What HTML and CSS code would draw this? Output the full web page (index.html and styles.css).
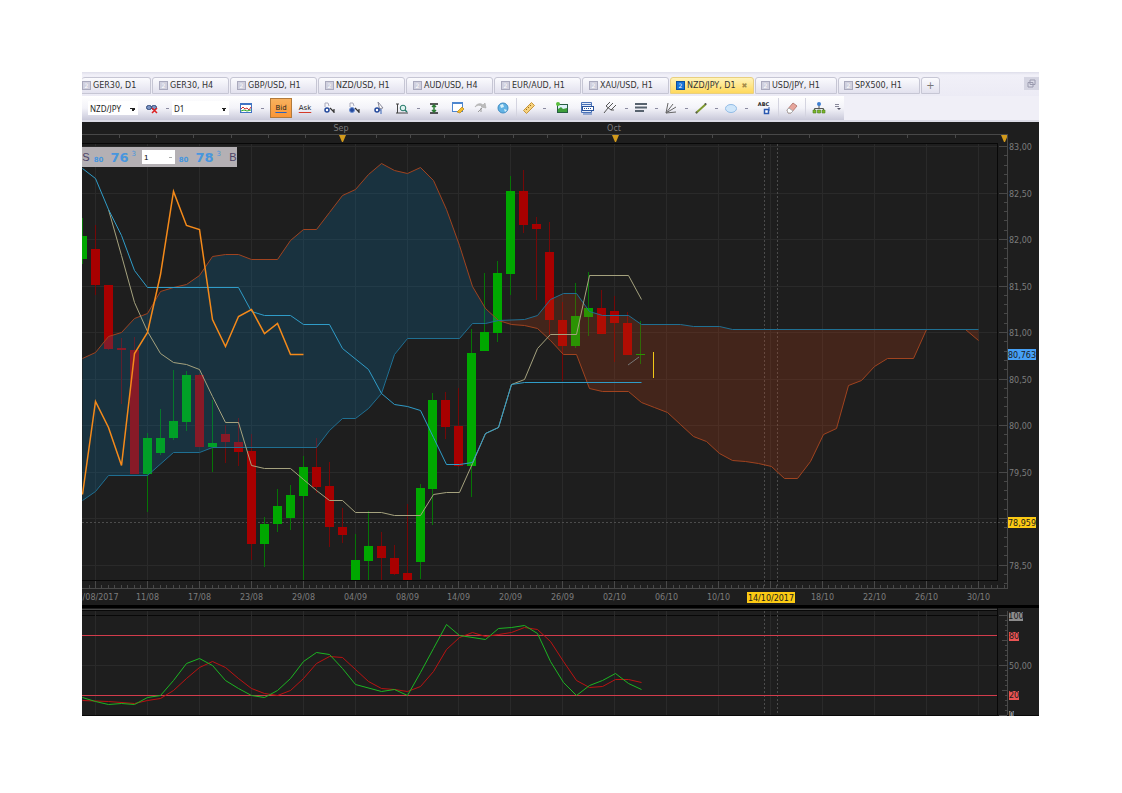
FILE: index.html
```html
<!DOCTYPE html>
<html lang="en">
<head>
    <meta charset="UTF-8">
    <meta name="viewport" content="width=device-width, initial-scale=1.0">
    <title>NZD/JPY, D1</title>
    <link rel="stylesheet" href="styles.css">
</head>
<body>

    <main class="workspace">
        <!-- Chart tabs -->
        <nav class="tabs">
            <a href="#" class="tab first"><span class="tab-icon">2</span>GER30, D1</a>
            <a href="#" class="tab short"><span class="tab-icon">2</span>GER30, H4</a>
            <a href="#" class="tab"><span class="tab-icon">2</span>GBP/USD, H1</a>
            <a href="#" class="tab"><span class="tab-icon">2</span>NZD/USD, H1</a>
            <a href="#" class="tab"><span class="tab-icon">2</span>AUD/USD, H4</a>
            <a href="#" class="tab"><span class="tab-icon">2</span>EUR/AUD, H1</a>
            <a href="#" class="tab"><span class="tab-icon">2</span>XAU/USD, H1</a>
            <a href="#" class="tab active"><span class="tab-icon">2</span>NZD/JPY, D1<span class="tab-close">✖</span></a>
            <a href="#" class="tab medium"><span class="tab-icon">2</span>USD/JPY, H1</a>
            <a href="#" class="tab medium"><span class="tab-icon">2</span>SPX500, H1</a>
            <button class="tab-add" aria-label="New tab">+</button>
            <button class="restore" aria-label="Restore window">
                <svg width="9" height="9" viewBox="0 0 9 9"><path d="M3 1h5v4.500H3zM1 3.500h5V8H1z" fill="#dcdce8" stroke="#9a9aae"/></svg>
            </button>
        </nav>

        <!-- Toolbar -->
        <div class="toolbar-row">
            <div class="toolbar">
                <select class="symbol" aria-label="Symbol"><option>NZD/JPY</option></select>
                <button class="tool small" aria-label="Link charts">
                    <svg viewBox="0 0 14 14"><rect x="1.500" y="4.500" width="5" height="4" rx="2" fill="#7c95c4" stroke="#2d4778"/><rect x="6.500" y="4.500" width="5" height="4" rx="2" fill="#7c95c4" stroke="#2d4778"/><path d="M7 7l5 5M12 7l-5 5" stroke="#d22" stroke-width="1.500"/></svg>
                </button>
                <button class="caret" aria-label="Link options"></button>
                <select class="period" aria-label="Period"><option>D1</option></select>
                <button class="tool chart-kind" aria-label="Chart type">
                    <svg viewBox="0 0 14 14"><rect x="1.500" y="2.500" width="11" height="9" fill="#fff" stroke="#3f74c4"/><path d="M1 3h12" stroke="#3f74c4" stroke-width="2"/><path d="M2 8l2-2 2 2 2-1 2 2 2-3" fill="none" stroke="#c33"/><path d="M2 10l3-1 3 1 4-1" fill="none" stroke="#3a3"/></svg>
                </button>
                <button class="caret" aria-label="Chart type options"></button>
                <button class="price bid on">Bid</button>
                <button class="price ask">Ask</button>
                <button class="tool wide" aria-label="Zoom to object">
                    <svg viewBox="0 0 14 14"><path d="M3 6V2h3l1 3" fill="none" stroke="#aab"/><circle cx="5" cy="9" r="2" fill="#fff" stroke="#24499c" stroke-width="1.500"/><path d="M8 7l4 4M12 8v4" fill="none" stroke="#333" stroke-width="1.200"/></svg>
                </button>
                <button class="tool wide" aria-label="Scroll chart">
                    <svg viewBox="0 0 14 14"><path d="M3 6V2h3l1 3" fill="none" stroke="#aab"/><circle cx="5" cy="9" r="2.500" fill="#24499c" stroke="#6f92d4"/><path d="M8 7l4 4M12 8v4" fill="none" stroke="#333" stroke-width="1.200"/></svg>
                </button>
                <button class="tool wide" aria-label="Select object">
                    <svg viewBox="0 0 14 14"><path d="M6 1l5 6-3 .5V10z" fill="#fff" stroke="#889"/><circle cx="5" cy="9" r="2" fill="#fff" stroke="#24499c" stroke-width="1.500"/><path d="M9 8v5" stroke="#3665b8"/></svg>
                </button>
                <button class="tool" aria-label="Zoom">
                    <svg viewBox="0 0 14 14"><path d="M2.500 3v9M1 3h3M1 12h12" stroke="#444" fill="none"/><circle cx="8" cy="7" r="2.800" fill="#dff2f0" stroke="#276"/><path d="M10 9l2 2" stroke="#276" stroke-width="1.500"/></svg>
                </button>
                <button class="caret" aria-label="Zoom options"></button>
                <button class="tool" aria-label="Fit price scale">
                    <svg viewBox="0 0 14 14"><path d="M3 3h8M3 12h8" stroke="#222" stroke-width="1.500"/><path d="M7 4v7M5 6l2-2 2 2M5 9l2 2 2-2" stroke="#2b7a33" fill="none" stroke-width="1.500"/></svg>
                </button>
                <button class="tool wide" aria-label="Edit template">
                    <svg viewBox="0 0 14 14"><rect x="1.500" y="1.500" width="10" height="9" fill="#fff" stroke="#4d86cf"/><path d="M1 2h11" stroke="#4d86cf" stroke-width="2"/><path d="M6 11l5-5 2 2-4 4z" fill="#f3bd2e" stroke="#b88113" stroke-width=".7"/></svg>
                </button>
                <button class="tool" aria-label="Redo">
                    <svg viewBox="0 0 14 14"><path d="M1 6c2-4 6-4 8-2l2-2 1 5-5-1 1-1C6 4 3 4 1 6z" fill="#bbb" stroke="#aaa" stroke-width=".6"/><path d="M4 11l4-4M7 7v4" stroke="#999"/></svg>
                </button>
                <button class="tool" aria-label="Web">
                    <svg viewBox="0 0 14 14"><circle cx="7" cy="7" r="5" fill="#62b2e4" stroke="#3f8dc4"/><path d="M4 4l3-1 1 3-3 1zM8 8l3 1-2 2z" fill="#d5f0fa"/></svg>
                </button>
                <span class="divider"></span>
                <button class="tool small" aria-label="Ruler">
                    <svg viewBox="0 0 14 14"><path d="M1.500 9.500l8-8 3 3-8 8z" fill="#f6d27e" stroke="#c8963a"/><path d="M4 8l1 1M6 6l1 1M8 4l1 1" stroke="#9c6c1b"/></svg>
                </button>
                <button class="caret" aria-label="Ruler options"></button>
                <button class="tool wide" aria-label="Save picture">
                    <svg viewBox="0 0 14 14"><rect x="2" y="3" width="11" height="9" fill="#275f43"/><rect x="3" y="4" width="9" height="4" fill="#dff0fa"/><path d="M3 11V8l3-2 2 2 4-1v4z" fill="#3e9e3a"/><circle cx="3" cy="3" r="2" fill="#5abf3c"/></svg>
                </button>
                <button class="tool wide" aria-label="Add label">
                    <svg viewBox="0 0 14 14"><path d="M1.500 1.500h10v10h-10zM1.500 3.500h10" fill="#e4ecf8" stroke="#4a72b8"/><rect x="2.500" y="5.500" width="11" height="4" fill="#fff" stroke="#29539c"/><path d="M4 7.500h8" stroke="#29539c" stroke-dasharray="1 1"/><path d="M3 13h9" stroke="#4a72b8"/></svg>
                </button>
                <button class="tool" aria-label="Pitchfork">
                    <svg viewBox="0 0 14 14"><path d="M1 12l4-5M3 5l5 4M3 5l4-4M5 7l5-5M8 9l5-5M8 9h3" fill="none" stroke="#555"/></svg>
                </button>
                <button class="caret" aria-label="Pitchfork options"></button>
                <button class="tool small" aria-label="Fibonacci">
                    <svg viewBox="0 0 14 14"><path d="M1 3h12M1 6.500h12M1 10h9" stroke="#57626e" stroke-width="2"/></svg>
                </button>
                <button class="caret" aria-label="Fibonacci options"></button>
                <button class="tool small" aria-label="Fan">
                    <svg viewBox="0 0 14 14"><path d="M2 12L4 2M2 12l7-9M2 12l10-6M2 12l10-1" stroke="#666" fill="none"/></svg>
                </button>
                <button class="caret" aria-label="Fan options"></button>
                <button class="tool small" aria-label="Line">
                    <svg viewBox="0 0 14 14"><path d="M2 12L12 3" stroke="#7f9a30" stroke-width="2"/><circle cx="2.500" cy="11.500" r="1" fill="#555"/><circle cx="11.500" cy="3" r="1" fill="#555"/></svg>
                </button>
                <button class="caret" aria-label="Line options"></button>
                <button class="tool small" aria-label="Ellipse">
                    <svg viewBox="0 0 14 14"><ellipse cx="7" cy="7.500" rx="5.500" ry="4" fill="#cfe6fa" stroke="#92bce6"/></svg>
                </button>
                <button class="caret" aria-label="Ellipse options"></button>
                <button class="tool wide text-tool" aria-label="Text label">ABC
                    <svg viewBox="0 0 8 8"><rect x="1.500" y="2.500" width="4" height="4" fill="#fff" stroke="#2a58b0" stroke-width="1.500"/><path d="M6 0v4" stroke="#2a58b0"/></svg>
                </button>
                <span class="divider"></span>
                <button class="tool" aria-label="Eraser">
                    <svg viewBox="0 0 14 14"><path d="M2 9l6-7 4 3-6 7H3z" fill="#e7a59c" stroke="#b98078"/><path d="M2 9l2-2 4 3-2 2H3z" fill="#fff" stroke="#aaa"/></svg>
                </button>
                <span class="divider"></span>
                <button class="tool" aria-label="Object tree">
                    <svg viewBox="0 0 14 14"><path d="M7 4v4M2.500 10V7.500h9V10" stroke="#555" fill="none"/><circle cx="7" cy="3" r="2" fill="#3f7fd0"/><path d="M1 9h3v3H1zM5.500 9h3v3h-3zM10 9h3v3h-3z" fill="#7eb62c" stroke="#47801c" stroke-width=".6"/></svg>
                </button>
                <button class="more" aria-label="More buttons">
                    <svg width="8" height="8" viewBox="0 0 8 8"><path d="M1 1.500h4M1 3.500h4" stroke="#889"/><path d="M3 5h4L5 7z" fill="#556"/></svg>
                </button>
            </div>
        </div>

        <!-- Price chart -->
        <section class="panel">
            <svg id="price-chart" viewBox="82 122 957 484" role="img" aria-label="NZD/JPY daily chart"></svg>
            <form class="ticket">
                <button type="button" class="side">S</button>
                <span class="quote"><small>80</small><b>76</b><sup>3</sup></span>
                <select class="amount" aria-label="Amount"><option>1</option></select>
                <span class="quote"><small>80</small><b>78</b><sup>3</sup></span>
                <button type="button" class="side">B</button>
            </form>
        </section>

        <!-- Stochastic -->
        <section class="panel">
            <svg id="stoch-chart" viewBox="82 606 957 110" role="img" aria-label="Stochastic oscillator"></svg>
        </section>
    </main>

    <script src="chart.js"></script>
</body>
</html>
```

FILE: styles.css
```css
* {
    box-sizing: border-box;
}

body {
    font-family: "DejaVu Sans", Verdana, sans-serif;
    font-size: 8px;
    background-color: #fff;
    color: #222;
    margin: 0;
    padding: 72px 83px 77px 82px;
}

button {
    font: inherit;
    color: inherit;
    border: none;
    background: none;
    padding: 0;
}

.workspace {
    background: #1e1e1e;
    overflow: hidden;
}

/* tabs */
.tabs {
    display: flex;
    align-items: flex-end;
    gap: 1px;
    height: 24px;
    padding-bottom: 2px;
    background: linear-gradient(#dedeea, #f1f0f8 3px, #ecebf5);
}

.tab {
    display: flex;
    align-items: center;
    gap: 2px;
    flex: 0 0 87px;
    height: 17px;
    padding-left: 6px;
    border: 1px solid #c6c6d4;
    border-radius: 3px 3px 0 0;
    background: linear-gradient(#fbfbfe, #e2e1ee);
    color: #333;
    text-decoration: none;
    white-space: nowrap;
}

.tab.first {
    flex-basis: 69px;
    padding-left: 0;
    border-left: none;
}

.tab.short {
    flex-basis: 77px;
}

.tab.medium {
    flex-basis: 82px;
    padding-left: 5px;
}

.tab.active {
    flex-basis: 84px;
    padding-left: 5px;
    background: linear-gradient(#fff3b8, #ffd95c);
    border-color: #e8cf80;
}

.tab-icon {
    width: 9px;
    height: 9px;
    border: 1px solid #a9a9bd;
    background: #d0d0de;
    color: #fff;
    font-size: 6px;
    line-height: 7px;
    text-align: center;
}

.active .tab-icon {
    background: #1673d8;
    border-color: #0c4f9c;
}

.tab-close {
    margin-left: 4px;
    color: #a58b4a;
    font-size: 7px;
}

.tab-add {
    width: 19px;
    height: 17px;
    border: 1px solid #c6c6d4;
    border-radius: 3px 3px 0 0;
    background: linear-gradient(#fbfbfe, #e2e1ee);
    color: #777;
    font-size: 10px;
    line-height: 14px;
}

.restore {
    display: flex;
    align-items: center;
    justify-content: center;
    width: 15px;
    height: 13px;
    margin: 0 0 4px auto;
    background: #d5d5e2;
}

/* toolbar */
.toolbar-row {
    background: #f0eff7;
    border-bottom: 2px solid #dcdce6;
}

.toolbar {
    display: flex;
    align-items: center;
    width: 762px;
    height: 24px;
    padding-left: 6px;
    background: linear-gradient(#ffffff, #f3f3f9 50%, #c9c9da);
}

.toolbar select {
    appearance: none;
    height: 14px;
    padding: 0 2px;
    border: none;
    border-radius: 0;
    background-color: #fff;
    background-image: linear-gradient(to bottom left, #222 50%, transparent 50%), linear-gradient(to bottom right, #222 50%, transparent 50%);
    background-repeat: no-repeat;
    background-size: 3px 3px;
    background-position: right 5px top 7px, right 2px top 7px;
    color: #222;
    font-family: "Noto Sans", sans-serif;
    font-size: 8px;
}

.toolbar .symbol {
    width: 50px;
    margin-right: 4px;
}

.toolbar .period {
    width: 57px;
    margin-right: 6px;
}

.tool {
    display: flex;
    align-items: center;
    justify-content: center;
    flex: 0 0 22px;
    height: 20px;
}

.tool.small {
    flex-basis: 20px;
}

.tool.wide {
    flex-basis: 25px;
}

.tool svg {
    width: 14px;
    height: 14px;
}

.caret {
    flex: 0 0 10px;
    height: 20px;
    background: linear-gradient(#8a8aa0, #8a8aa0) no-repeat center / 3px 1px;
}

.price {
    width: 22px;
    height: 20px;
    border: 1px solid transparent;
    font-size: 7px;
    text-decoration: underline 1px;
    text-underline-offset: 2px;
}

.bid {
    margin: 0 2px 0 3px;
    text-decoration-color: #2a62c0;
}

.ask {
    text-decoration-color: #d43a2a;
}

.price.on {
    background: linear-gradient(#f9b25e, #fb9636);
    border-color: #b27a3c;
}

.divider {
    flex: 0 0 1px;
    height: 20px;
    margin: 0 2px;
    background: #d4d4e0;
}

.tool.text-tool {
    flex-direction: column;
    font-size: 5px;
    font-weight: bold;
    line-height: 5px;
}

.text-tool svg {
    width: 8px;
    height: 8px;
    margin-left: 6px;
}

.more {
    width: 12px;
    height: 24px;
    margin-left: auto;
}

/* charts */
.panel {
    position: relative;
}

.panel > svg {
    display: block;
    width: 100%;
    height: auto;
}

.grid {
    stroke: #2a2a2a;
}

.edge {
    stroke: #080808;
}

.gutter {
    fill: #000;
}

.axis,
.tick {
    stroke: #484848;
}

.axis-text {
    fill: #7c7c7c;
    font-size: 8px;
}

.middle {
    text-anchor: middle;
}

.marker {
    fill: #d29a1c;
}

.crosshair {
    stroke: #4c4c4c;
    stroke-dasharray: 2 2;
}

.up {
    fill: #00a800;
    stroke: none;
}

.down {
    fill: #a80000;
    stroke: none;
}

.wick.up {
    fill: #067506;
}

.wick.down {
    fill: #740808;
}

.line {
    fill: none;
    stroke-width: 1;
}

.cloud-up {
    fill: rgba(5, 130, 195, 0.2);
}

.cloud-down {
    fill: rgba(215, 65, 15, 0.2);
}

.span-a {
    stroke: #a0431f;
}

.span-b {
    stroke: #1f6f92;
}

.tenkan {
    stroke: #a5a27e;
}

.kijun {
    stroke: #2f9cc8;
}

.chikou {
    stroke: #f58a1a;
    stroke-width: 1.5;
}

.last {
    stroke: #f2c818;
}

.dash {
    stroke: #777;
}

.level {
    stroke: #d23c4c;
}

.k {
    stroke: #1cb522;
}

.d {
    stroke: #bb1212;
}

.tag-text {
    fill: #1b1b1b;
    font-size: 8px;
}

.tag-blue {
    fill: #46a0f5;
}

.tag-yellow {
    fill: #fcca14;
}

.tag-grey {
    fill: #8c8c8c;
}

.tag-red {
    fill: #ea5454;
}

/* one-click order ticket */
.ticket {
    position: absolute;
    top: 25px;
    left: 0;
    display: flex;
    align-items: center;
    width: 155px;
    height: 20px;
    background: #b4b0b4;
    color: #4d4468;
}

.side {
    width: 8px;
    font-family: "Liberation Sans", sans-serif;
    font-size: 11px;
}

.quote {
    display: flex;
    align-items: center;
    justify-content: flex-end;
    width: 50px;
    padding-right: 4px;
    color: #4796de;
}

.quote small {
    margin: 5px 7px 0 0;
    font-size: 7px;
    font-weight: bold;
}

.quote b {
    font-size: 13px;
}

.quote sup {
    margin: 0 0 6px 3px;
    font-size: 7px;
    line-height: 7px;
}

.ticket .amount {
    appearance: none;
    width: 33px;
    height: 14px;
    margin-left: 2px;
    padding: 0 2px;
    border: none;
    border-radius: 0;
    background: #fff linear-gradient(#aaa, #aaa) no-repeat right 3px center / 3px 1px;
    font-size: 8px;
}

.ticket .side:last-child {
    margin-left: auto;
}
```

FILE: chart.js
```js
const NS = 'http://www.w3.org/2000/svg';
const price = document.getElementById('price-chart');
const stoch = document.getElementById('stoch-chart');

function add(parent, tag, attrs, text) {
    const el = document.createElementNS(NS, tag);
    for (const key in attrs) el.setAttribute(key, attrs[key]);
    if (text !== undefined) el.textContent = text;
    parent.appendChild(el);
    return el;
}

function line(parent, cls, x1, y1, x2, y2) {
    add(parent, 'line', { class: cls, x1, y1, x2, y2 });
}

function tag(parent, cls, x, y, width, text, height = 11) {
    add(parent, 'rect', { class: cls, x, y, width, height });
    add(parent, 'text', { class: 'tag-text middle', x: x + width / 2, y: y + height - 2 }, text);
}

const barX = i => Math.round(95 + i * 12.98) + 0.5;

// [bar, body top, body bottom, high, low, direction]
const candles = [
    [-1, 236, 259, 218, 264, 1], [0, 249, 285, 225, 295, 0], [1, 285, 349, 285, 350, 0],
    [2, 348, 350, 338, 404, 0], [3, 350, 474, 337, 474, 0], [4, 438, 474, 433, 512, 1],
    [5, 438, 453, 409, 455, 1], [6, 421, 438, 370, 440, 1], [7, 375, 422, 371, 431, 1],
    [8, 375, 447, 374, 447, 0], [9, 443, 447, 400, 472, 1], [10, 434, 442, 425, 463, 0],
    [11, 442, 452, 418, 466, 0], [12, 451, 544, 434, 560, 0], [13, 524, 544, 517, 567, 1],
    [14, 506, 524, 489, 532, 1], [15, 495, 518, 485, 530, 1], [16, 467, 496, 456, 580, 1],
    [17, 467, 487, 438, 493, 0], [18, 486, 527, 462, 547, 0], [19, 527, 535, 508, 543, 0],
    [20, 560, 580, 534, 580, 1], [21, 546, 561, 511, 580, 1], [22, 546, 558, 532, 580, 0],
    [23, 558, 574, 545, 575, 0], [24, 573, 580, 504, 580, 0], [25, 488, 562, 484, 579, 1],
    [26, 400, 489, 393, 525, 1], [27, 400, 427, 392, 439, 0], [28, 426, 466, 388, 467, 0],
    [29, 353, 466, 329, 497, 1], [30, 332, 351, 273, 351, 1], [31, 273, 333, 261, 342, 1],
    [32, 191, 274, 176, 295, 1], [33, 191, 225, 170, 233, 0], [34, 224, 229, 217, 300, 0],
    [35, 252, 320, 222, 335, 0], [36, 320, 346, 302, 381, 0], [37, 316, 346, 283, 348, 1],
    [38, 308, 317, 272, 336, 1], [39, 308, 334, 290, 334, 0], [40, 311, 323, 296, 362, 0],
    [41, 323, 355, 312, 355, 0], [42, 354, 355, 321, 364, 1]
];

// Ichimoku
const spanAUp = '82,358 95,352 108,336 121,332 134,318 147,313 160,291 173,287 186,284 199,275 212,256 225,254 238,254 251,259 277,259 290,240 303,229 316,229 329,212 342,195 355,189 368,174 381,163 394,170 407,173 420,167 433,180 446,209 459,245 472,286 485,308 498,320';
const spanADown = '498,320 511,324 524,325 537,328 550,340 563,354 576,354 589,388 602,391 628,391 641,402 654,407 667,412 680,424 693,436 706,441 719,453 732,460 745,461 758,463 771,466 784,478 797,478 810,461 823,434 836,428 848,385 861,380 874,366 887,358 913,358 926,329 965,329 978,340';
const spanBUp = '82,500 95,491 108,475 147,475 173,452 199,452 212,447 316,447 329,430 342,418 355,418 368,408 381,393 394,354 407,338 459,338 472,323 485,323 498,320';
const spanBDown = '498,320 524,319 537,315 550,299 563,293 576,293 589,311 602,315 628,315 641,324 680,324 693,326 719,326 732,329 978,329';
const tenkan = '108,209 121,255 134,302 147,331 160,353 173,362 186,364 199,369 212,396 225,422 238,422 251,465 264,468 290,468 303,479 316,490 329,500 342,500 355,512 381,512 394,515 420,515 433,494 446,492 459,492 472,463 485,433 498,427 511,384 524,379 537,348 550,334 576,334 589,275 628,275 641,299';
const kijun = '82,168 95,178 108,209 121,235 134,270 147,287 238,287 251,311 264,315 290,315 303,324 329,324 342,348 368,369 381,393 394,404 407,406 420,410 433,437 446,464 459,464 472,462 485,433 498,427 511,384 524,382 641,382';
const chikou = '82,494 95,401 108,427 121,465 134,353 147,332 160,274 173,191 186,225 199,229 212,319 225,346 238,316 251,309 264,333 277,323 290,354 303,354';

// Stochastic
const k = '82,697 95,701 108,704 121,703 134,704 147,697 160,695 173,680 186,663 199,658 212,665 225,680 238,688 251,695 264,697 277,690 290,678 303,661 316,652 329,654 342,668 355,684 381,691 394,689 407,695 420,672 433,648 446,624 459,635 485,639 498,628 511,627 524,625 537,633 550,661 563,682 576,695 589,685 602,680 615,673 628,683 641,689';
const d = '82,700 108,701 134,703 147,700 160,698 173,690 186,678 199,667 212,661 225,667 238,678 251,688 264,693 277,695 290,690 303,678 316,663 329,656 342,657 355,669 368,681 381,688 394,689 407,691 420,686 433,671 446,649 459,637 472,632 485,636 498,634 511,632 524,627 537,629 550,641 563,661 576,680 589,687 602,686 615,679 628,679 641,682';

function poly(parent, cls, points) {
    add(parent, 'polyline', { class: 'line ' + cls, points, transform: 'translate(.5 .5)' });
}

function cloud(cls, top, bottom) {
    const points = top + ' ' + bottom.split(' ').reverse().join(' ');
    add(price, 'polygon', { class: cls, points, transform: 'translate(.5 .5)' });
}

function drawPriceChart() {
    const dates = ['07/08/2017', '11/08', '17/08', '23/08', '29/08', '04/09', '08/09', '14/09', '20/09',
        '26/09', '02/10', '06/10', '10/10', '', '18/10', '22/10', '26/10', '30/10'];
    const prices = ['83,00', '82,50', '82,00', '81,50', '81,00', '80,50', '80,00', '79,50', '', '78,50'];

    dates.forEach((text, i) => {
        const x = barX(i * 4);
        line(price, 'grid', x, 144, x, 580);
        line(price, 'tick', x, 580, x, 588);
        add(price, 'text', { class: 'axis-text middle', x, y: 600 }, text);
    });
    for (let x = 88.5; x < 1005; x += 6.49) {
        const px = Math.round(x) + 0.5;
        line(price, 'tick', px, 585, px, 588);
    }

    prices.forEach((text, i) => {
        const y = Math.round(147 + i * 46.5) - 0.5;
        line(price, 'grid', 82, y, 998, y);
        line(price, 'tick', 999, y, 1007, y);
        add(price, 'text', { class: 'axis-text', x: 1009, y: y + 3 }, text);
    });
    for (let y = 147; y < 588; y += 9.3) {
        const py = Math.round(y) - 0.5;
        line(price, 'tick', 1004, py, 1007, py);
    }

    // month ruler
    line(price, 'axis', 82, 134.5, 1007, 134.5);
    [[119, 37.2, 6], [342, 34.1, 8], [615, 48.6, 8]].forEach(([start, step, count]) => {
        for (let i = 0; i < count; i++) {
            const x = Math.round(start + i * step) + 0.5;
            line(price, 'tick', x, 135, x, 138);
        }
    });
    [[342, 'Sep'], [615, 'Oct'], [1004, '']].forEach(([x, text]) => {
        add(price, 'text', { class: 'axis-text middle', x: x - 1, y: 131 }, text);
        add(price, 'path', { class: 'marker', d: `M${x - 3} 135h7l-3 7h-1z` });
    });

    line(price, 'edge', 82, 143.5, 998, 143.5);
    line(price, 'edge', 82, 580.5, 998, 580.5);
    line(price, 'edge', 997.5, 143, 997.5, 581);
    line(price, 'axis', 82, 588.5, 1008, 588.5);
    line(price, 'axis', 1007.5, 134, 1007.5, 589);

    line(price, 'crosshair', 764.5, 144, 764.5, 588);
    line(price, 'crosshair', 777.5, 144, 777.5, 588);
    line(price, 'crosshair', 82, 522.5, 1007, 522.5);

    candles.forEach(([i, top, bottom, high, low, up]) => {
        const dir = up ? 'up' : 'down';
        const x = barX(i);
        add(price, 'rect', { class: 'wick ' + dir, x: x - 0.5, y: high, width: 1, height: low - high });
        add(price, 'rect', { class: dir, x: x - 4.5, y: top, width: 9, height: bottom - top });
    });

    cloud('cloud-up', spanAUp, spanBUp);
    cloud('cloud-down', spanBDown, spanADown);
    poly(price, 'span-a', spanAUp + ' ' + spanADown);
    poly(price, 'span-b', spanBUp + ' ' + spanBDown);
    poly(price, 'tenkan', tenkan);
    poly(price, 'kijun', kijun);
    poly(price, 'chikou', chikou);
    line(price, 'dash', 628, 365, 639, 357);
    line(price, 'last', 653.5, 352, 653.5, 378);

    tag(price, 'tag-blue', 1008, 349, 28, '80,763');
    tag(price, 'tag-yellow', 1008, 517, 28, '78,959');
    tag(price, 'tag-yellow', 747, 592, 48, '14/10/2017');
    add(price, 'rect', { class: 'gutter', x: 82, y: 605, width: 957, height: 1 });
}

function drawStochastic() {
    add(stoch, 'rect', { class: 'gutter', x: 82, y: 606, width: 957, height: 2 });
    line(stoch, 'axis', 82, 609.5, 998, 609.5);
    line(stoch, 'edge', 82, 610.5, 998, 610.5);
    line(stoch, 'edge', 82, 615.5, 998, 615.5);
    for (let i = 0; i < 18; i++) {
        line(stoch, 'grid', barX(i * 4), 611, barX(i * 4), 715);
    }
    line(stoch, 'grid', 82, 665.5, 998, 665.5);
    line(stoch, 'crosshair', 764.5, 611, 764.5, 715);
    line(stoch, 'crosshair', 777.5, 611, 777.5, 715);
    line(stoch, 'level', 82, 635.5, 998, 635.5);
    line(stoch, 'level', 82, 695.5, 998, 695.5);
    poly(stoch, 'd', d);
    poly(stoch, 'k', k);
    line(stoch, 'edge', 997.5, 608, 997.5, 715);
    line(stoch, 'edge', 82, 715.5, 1039, 715.5);
    line(stoch, 'axis', 1007.5, 611, 1007.5, 715);
    for (let i = 0; i <= 20; i++) {
        const y = 615.5 + i * 5;
        line(stoch, 'tick', i % 10 ? (i % 5 ? 1005 : 1002) : 999, y, 1007, y);
    }
    tag(stoch, 'tag-grey', 1009, 612, 14, '100', 9);
    tag(stoch, 'tag-red', 1009, 632, 10, '80', 9);
    add(stoch, 'text', { class: 'axis-text', x: 1009, y: 669 }, '50,00');
    tag(stoch, 'tag-red', 1009, 691, 10, '20', 9);
    tag(stoch, 'tag-grey', 1009, 711, 5, '0', 9);
}

drawPriceChart();
drawStochastic();
```
